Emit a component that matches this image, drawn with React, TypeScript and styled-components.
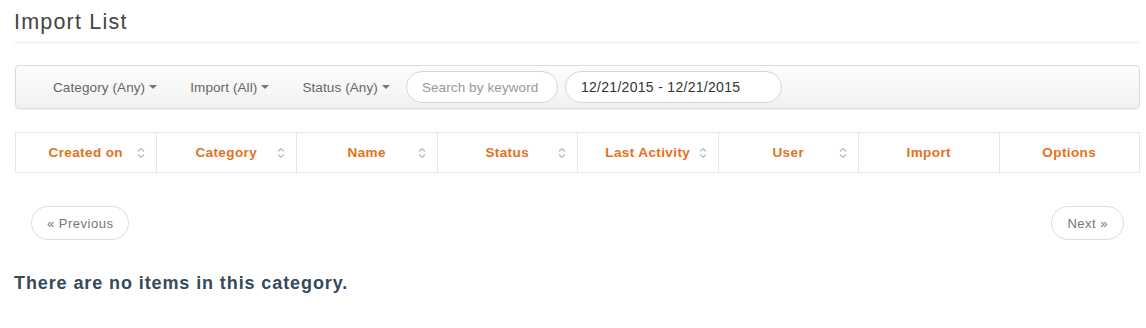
import React, { useState } from 'react';
import styled, { createGlobalStyle } from 'styled-components';

const GlobalStyle = createGlobalStyle`
  html, body {
    margin: 0;
    padding: 0;
    background: #fff;
  }
  body {
    font-family: "Liberation Sans", Arial, sans-serif;
    color: #333;
  }
`;

const Page = styled.div`
  padding: 0 6px 0 15px;
  width: 1125px;
`;

const Title = styled.h1`
  margin: 0 0 0 -1px;
  padding: 10px 0 7px;
  font-size: 21.5px;
  font-weight: 400;
  line-height: 25px;
  letter-spacing: 1.2px;
  color: #444;
  border-bottom: 1px solid #eeeeee;
`;

const Toolbar = styled.div`
  margin-top: 22px;
  height: 42px;
  display: flex;
  align-items: center;
  padding-left: 37px;
  border: 1px solid #dcdcdc;
  border-radius: 4px;
  background: linear-gradient(#fdfdfd, #f1f1f1);
  box-shadow: 0 1px 1px rgba(0, 0, 0, 0.04);
`;

const Dropdown = styled.button`
  display: flex;
  align-items: center;
  gap: 4px;
  margin-right: 33px;
  padding: 0;
  border: none;
  background: none;
  font-family: inherit;
  font-size: 13.5px;
  letter-spacing: 0.1px;
  color: #666;
  cursor: pointer;

  &:last-of-type {
    margin-right: 16px;
  }
`;

const Caret = styled.span`
  width: 0;
  height: 0;
  border-left: 4px solid transparent;
  border-right: 4px solid transparent;
  border-top: 4px solid #777;
`;

const PillInput = styled.input<{ $width: number }>`
  box-sizing: border-box;
  width: ${({ $width }) => $width}px;
  height: 32px;
  margin-right: 7px;
  padding: 0 12px 0 15px;
  border: 1px solid #d6d6d6;
  border-radius: 16px;
  background: #fff;
  font-family: inherit;
  font-size: 14px;
  letter-spacing: 0.3px;
  color: #333;
  outline: none;

  &::placeholder {
    color: #999;
    font-size: 13.5px;
    letter-spacing: 0.1px;
  }
`;

const Grid = styled.table`
  margin-top: 23px;
  width: 100%;
  border-collapse: collapse;
  table-layout: fixed;
`;

const HeadCell = styled.th`
  position: relative;
  height: 39px;
  padding: 0;
  border: 1px solid #e6e6e6;
  text-align: center;
  font-size: 13.5px;
  font-weight: 700;
  letter-spacing: 0.4px;
  color: #e5711b;
  cursor: pointer;
`;

const SortIcon = styled.svg`
  position: absolute;
  right: 11px;
  top: 14px;
`;

const Pager = styled.div`
  margin-top: 33px;
  display: flex;
  justify-content: space-between;
  padding: 0 16px;
`;

const PageButton = styled.button`
  height: 34px;
  padding: 0 15px;
  border: 1px solid #dedede;
  border-radius: 17px;
  background: #fff;
  font-family: inherit;
  font-size: 13px;
  letter-spacing: 0.5px;
  color: #777;
  cursor: pointer;
`;

const Empty = styled.p`
  margin: 32px 0 0 -1px;
  font-size: 18px;
  line-height: 22px;
  font-weight: 700;
  letter-spacing: 0.9px;
  color: #364a5c;
`;

const columns = [
  { label: 'Created on', sortable: true },
  { label: 'Category', sortable: true },
  { label: 'Name', sortable: true },
  { label: 'Status', sortable: true },
  { label: 'Last Activity', sortable: true },
  { label: 'User', sortable: true },
  { label: 'Import', sortable: false },
  { label: 'Options', sortable: false },
];

const Sort = () => (
  <SortIcon width="8" height="12" viewBox="0 0 8 12">
    <path d="M1 4.5 L4 1.5 L7 4.5 M1 7.5 L4 10.5 L7 7.5" fill="none" stroke="#b8b8b8" strokeWidth="1.2" />
  </SortIcon>
);

const App = () => {
  const [keyword, setKeyword] = useState('');
  const [range, setRange] = useState('12/21/2015 - 12/21/2015');

  return (
    <Page>
      <GlobalStyle />
      <Title>Import List</Title>
      <Toolbar>
        <Dropdown>Category (Any)<Caret /></Dropdown>
        <Dropdown>Import (All)<Caret /></Dropdown>
        <Dropdown>Status (Any)<Caret /></Dropdown>
        <PillInput
          $width={152}
          placeholder="Search by keyword"
          value={keyword}
          onChange={(e) => setKeyword(e.target.value)}
        />
        <PillInput $width={217} value={range} onChange={(e) => setRange(e.target.value)} />
      </Toolbar>
      <Grid>
        <thead>
          <tr>
            {columns.map((c) => (
              <HeadCell key={c.label}>
                {c.label}
                {c.sortable && <Sort />}
              </HeadCell>
            ))}
          </tr>
        </thead>
      </Grid>
      <Pager>
        <PageButton>« Previous</PageButton>
        <PageButton>Next »</PageButton>
      </Pager>
      <Empty>There are no items in this category.</Empty>
    </Page>
  );
};

export default App;
